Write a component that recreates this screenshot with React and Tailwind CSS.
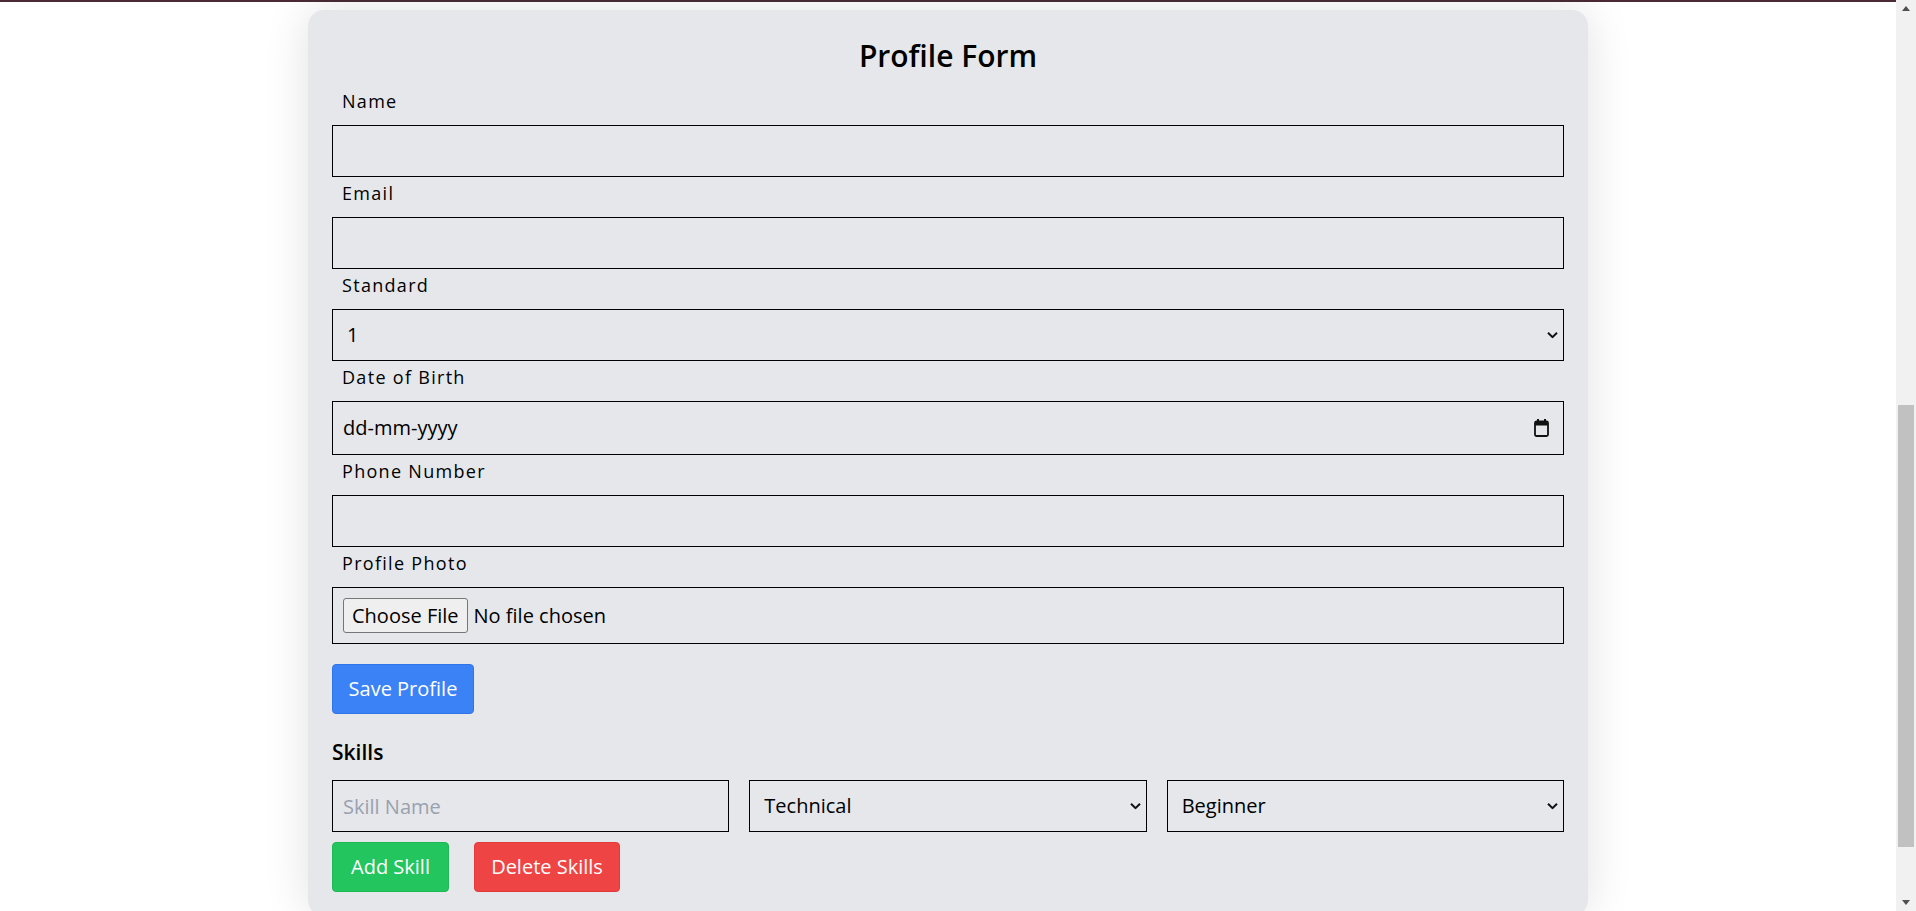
import React from 'react';

const labelCls = 'block mt-0.5 mb-2.5 pl-2.5 text-lg leading-7 tracking-[1.3px] text-black';
const inputCls = 'block w-full h-[52px] border border-black bg-transparent px-2.5 text-[20px] leading-[30px] text-black outline-none placeholder:text-gray-400';
const selectCls = 'block w-full h-[52px] appearance-none border border-black bg-transparent pl-[14px] pr-8 text-[20px] text-black outline-none';

const Chevron = () => (
  <svg
    width="11"
    height="7"
    viewBox="0 0 11 7"
    className="pointer-events-none absolute right-[6px] top-1/2 -translate-y-1/2"
  >
    <path d="M1 1.2l4.5 4.5 4.5-4.5" fill="none" stroke="#111" strokeWidth="2" />
  </svg>
);

const CalendarIcon = () => (
  <svg width="15" height="18" viewBox="0 0 15 18">
    <rect x="3" y="0" width="2" height="3" fill="#111" />
    <rect x="10" y="0" width="2" height="3" fill="#111" />
    <rect x="1" y="2.5" width="13" height="14.5" rx="1.5" fill="none" stroke="#111" strokeWidth="1.8" />
    <rect x="1" y="2.5" width="13" height="4" fill="#111" />
  </svg>
);

const SelectBox = ({ options, defaultValue }) => (
  <div className="relative">
    <select defaultValue={defaultValue} className={selectCls}>
      {options.map(o => (
        <option key={o} value={o}>{o}</option>
      ))}
    </select>
    <Chevron />
  </div>
);

const Field = ({ label, children }) => (
  <div>
    <label className={labelCls}>{label}</label>
    {children}
  </div>
);

const Scrollbar = () => (
  <div className="flex h-screen w-[20px] shrink-0 flex-col bg-[#f1f1f1]">
    <div className="flex h-[17px] items-center justify-center">
      <svg width="8" height="5" viewBox="0 0 8 5"><path d="M0 5L4 0L8 5Z" fill="#505050" /></svg>
    </div>
    <div className="h-[388px]" />
    <div className="mx-0.5 h-[442px] bg-[#c1c1c1]" />
    <div className="flex-1" />
    <div className="flex h-[17px] items-center justify-center">
      <svg width="8" height="5" viewBox="0 0 8 5"><path d="M0 0L4 5L8 0Z" fill="#505050" /></svg>
    </div>
  </div>
);

export default function App() {
  const standards = ['1', '2', '3', '4', '5', '6', '7', '8', '9', '10', '11', '12'];

  return (
    <div className="flex h-screen overflow-hidden bg-white font-['Open_Sans',sans-serif] text-black">
      <div className="min-w-0 flex-1 overflow-hidden">
        <div className="h-[2px] w-full bg-[#4b2a36]" />

        <div className="mx-auto mt-2 max-w-7xl rounded-2xl bg-gray-200 px-6 pt-7 pb-6 shadow-[0_0_45px_rgba(0,0,0,0.12)]">
          <h2 className="mb-[13px] text-center text-3xl leading-9 font-semibold">Profile Form</h2>

          <Field label="Name">
            <input type="text" className={inputCls} />
          </Field>
          <Field label="Email">
            <input type="email" className={inputCls} />
          </Field>
          <Field label="Standard">
            <SelectBox options={standards} defaultValue="1" />
          </Field>
          <Field label="Date of Birth">
            <div className="flex h-[54px] items-center justify-between border border-black pl-2.5 pr-[14px] text-[20px]">
              <span>dd-mm-yyyy</span>
              <CalendarIcon />
            </div>
          </Field>
          <Field label="Phone Number">
            <input type="tel" className={inputCls} />
          </Field>
          <Field label="Profile Photo">
            <div className="flex h-[57px] items-center border border-black px-2.5 text-[20px]">
              <span className="flex h-[35px] items-center rounded-[3px] border border-[#767676] bg-[#efefef] px-2">
                Choose File
              </span>
              <span className="ml-1.5">No file chosen</span>
            </div>
          </Field>

          <button className="mt-5 h-[50px] w-[142px] rounded border border-[#2f74e8] bg-[#3b82f6] text-[20px] text-white">
            Save Profile
          </button>

          <h3 className="mt-6 text-[21px] leading-7 font-semibold">Skills</h3>

          <div className="mt-3.5 grid grid-cols-3 gap-5">
            <input type="text" placeholder="Skill Name" className={inputCls} />
            <SelectBox options={['Technical', 'Soft Skill', 'Language']} defaultValue="Technical" />
            <SelectBox options={['Beginner', 'Intermediate', 'Advanced']} defaultValue="Beginner" />
          </div>

          <div className="mt-2.5 flex gap-[25px]">
            <button className="h-[50px] w-[117px] rounded border border-[#1cb954] bg-[#22c55e] text-[20px] text-white">
              Add Skill
            </button>
            <button className="h-[50px] w-[146px] rounded border border-[#e23a3a] bg-[#ef4444] text-[20px] text-white">
              Delete Skills
            </button>
          </div>
        </div>
      </div>
      <Scrollbar />
    </div>
  );
}
